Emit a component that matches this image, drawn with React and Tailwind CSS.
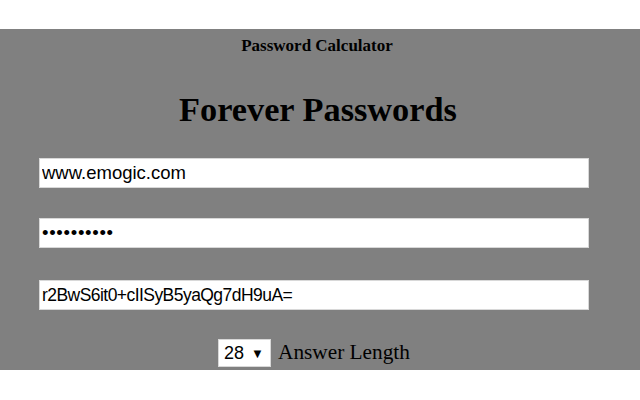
export default function App() {
  return (
    <div className="h-[400px] w-[640px] bg-white pt-[29px]">
      <div className="flex h-[341px] flex-col items-center bg-[#808080] text-black">
        <div className="mt-[8px] mr-[6px] font-['Liberation_Serif',serif] text-[17px] font-bold leading-[18px]">
          Password Calculator
        </div>
        <h1 className="mt-[35px] mr-[4px] font-['Liberation_Serif',serif] text-[34.3px] font-bold leading-[38px]">
          Forever Passwords
        </h1>
        <div className="mt-[30px] flex w-full flex-col gap-[30px] pl-[39px] pr-[51px]">
          <input
            readOnly
            value="www.emogic.com"
            className="h-[30px] w-full border border-[#d8d8d8] bg-white pl-[2px] font-['Liberation_Sans',sans-serif] text-[18.5px] text-black outline-none"
          />
          <input
            readOnly
            type="password"
            value="abcdefghij"
            className="h-[30px] w-full border border-[#d8d8d8] bg-white pl-[2px] font-['Liberation_Sans',sans-serif] text-[18.5px] tracking-[0.7px] text-black outline-none"
          />
          <input
            readOnly
            value="r2BwS6it0+cIISyB5yaQg7dH9uA="
            className="mt-[2px] h-[30px] w-full border border-[#d8d8d8] bg-white pl-[2px] font-['Liberation_Sans',sans-serif] text-[17.5px] tracking-[-0.55px] text-black outline-none"
          />
        </div>
        <div className="mt-[29px] mr-[12px] flex items-center gap-[7px]">
          <div className="flex h-[28px] w-[53px] items-center border border-[#d8d8d8] bg-white pl-[5px] font-['Liberation_Sans',sans-serif] text-[18px] leading-none">
            <span>28</span>
            <span className="ml-[7px] text-[13px]">▼</span>
          </div>
          <span className="font-['Liberation_Serif',serif] text-[21.3px] leading-none">
            Answer Length
          </span>
        </div>
      </div>
    </div>
  );
}
